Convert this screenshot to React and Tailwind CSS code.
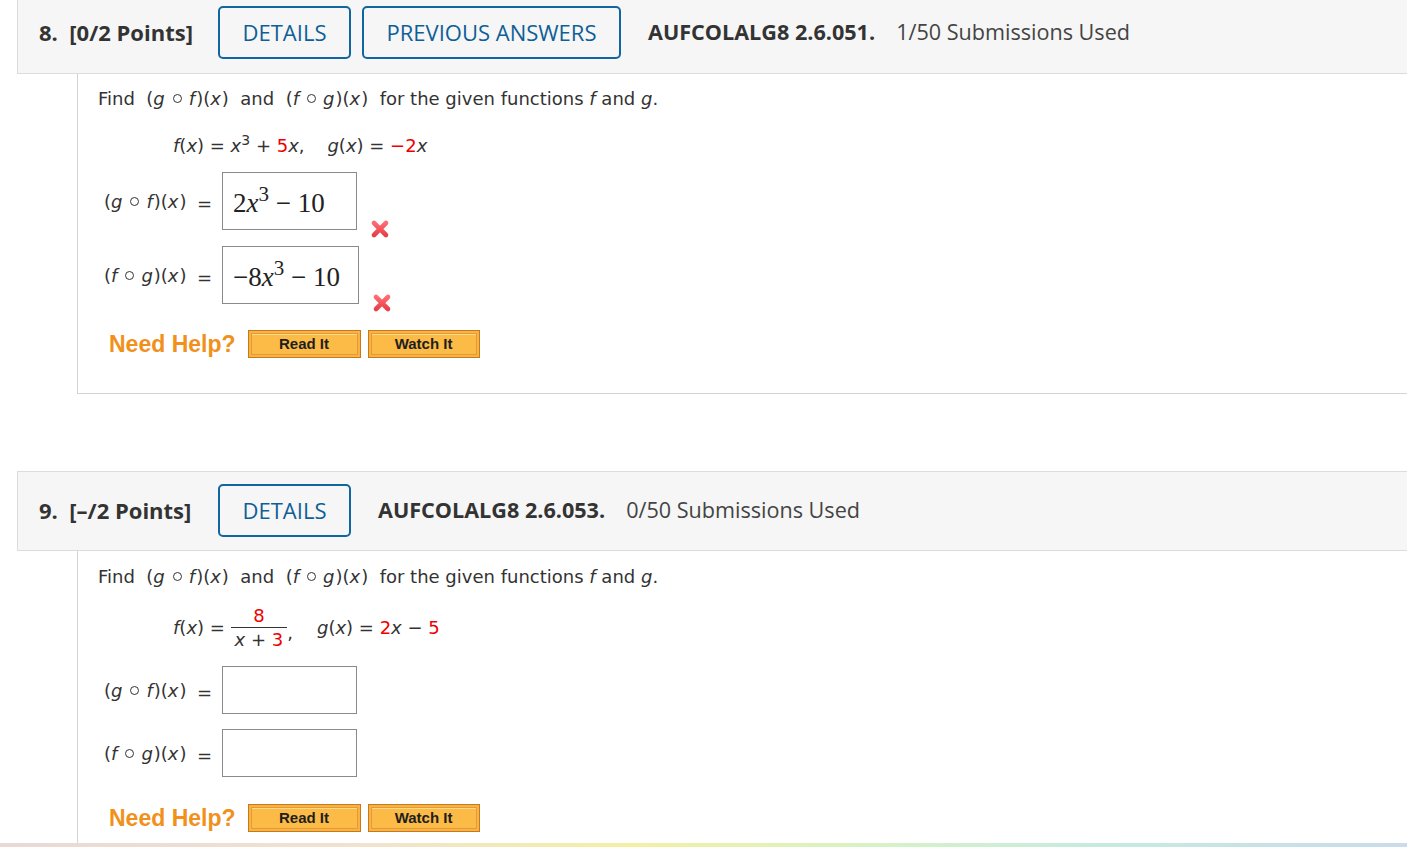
const HEAD = { fontFamily: '"Open Sans", "Liberation Sans", sans-serif' };
const MATH = { fontFamily: '"DejaVu Sans", Verdana, sans-serif' };
const TEX = { fontFamily: '"Liberation Serif", "DejaVu Serif", serif' };
const HELP = { fontFamily: '"Liberation Sans", Arial, sans-serif' };

function Ring() {
  return (
    <span className="mx-[7px] inline-block h-[9px] w-[9px] rounded-full border-[1.5px] border-[#333] align-[2px]" />
  );
}

function V({ children }) {
  return <i className="pr-[1px]">{children}</i>;
}

function Comp({ a, b }) {
  return (
    <span className="whitespace-nowrap">
      (<V>{a}</V>
      <Ring />
      <V>{b}</V>)(<V>x</V>)
    </span>
  );
}

function Red({ children }) {
  return <span className="text-[#ee0000]">{children}</span>;
}

function WrongMark() {
  return (
    <svg width="20" height="20" viewBox="0 0 20 20" className="shrink-0">
      <defs>
        <linearGradient id="xg" x1="0" y1="0" x2="0" y2="1">
          <stop offset="0" stopColor="#ff6b70" />
          <stop offset="1" stopColor="#e8404a" />
        </linearGradient>
      </defs>
      <path
        d="M4 4 L16 16 M16 4 L4 16"
        stroke="url(#xg)"
        strokeWidth="4.6"
        strokeLinecap="round"
      />
    </svg>
  );
}

function HeaderButton({ children, className = "" }) {
  return (
    <div
      className={
        "flex h-[53px] items-center justify-center rounded-[5px] border-2 border-[#1266a0] text-[22px] text-[#0e5f97] " +
        className
      }
    >
      {children}
    </div>
  );
}

function QuestionHeader({ num, points, prev, code, used, className = "" }) {
  return (
    <div
      className={
        "ml-[17px] flex shrink-0 items-center border-b border-l border-[#dcdcdc] bg-[#f6f6f6] pl-[21px] " +
        className
      }
      style={HEAD}
    >
      <span className="w-[179px] text-[22px] font-bold text-[#333]">
        {num}.&nbsp; {points}
      </span>
      <HeaderButton className="w-[133px]">DETAILS</HeaderButton>
      {prev ? (
        <HeaderButton className="ml-[11px] w-[259px]">PREVIOUS ANSWERS</HeaderButton>
      ) : null}
      <span className="ml-[27px] text-[21.6px] font-bold text-[#333]">{code}</span>
      <span className="ml-[21px] text-[21.6px] text-[#444]">{used}</span>
    </div>
  );
}

function AnswerBox({ children, w = "w-[135px]", h = "h-[58px]" }) {
  return (
    <div
      className={
        "flex shrink-0 items-center border border-[#8a8a8a] bg-white pl-[10px] pt-[4px] text-[27px] text-[#222] " +
        w +
        " " +
        h
      }
      style={TEX}
    >
      {children}
    </div>
  );
}

function AnswerRow({ a, b, children, mark, w, h, className = "" }) {
  return (
    <div className={"flex items-center " + className}>
      <span className="flex w-[144px] shrink-0 items-center justify-between pl-[26px] pr-[10px] text-[18px] text-[#333]">
        <Comp a={a} b={b} />
        <span className="mt-[4px]">=</span>
      </span>
      <AnswerBox w={w} h={h}>
        {children}
      </AnswerBox>
      {mark ? (
        <span className="ml-[13px] mt-[56px]">
          <WrongMark />
        </span>
      ) : null}
    </div>
  );
}

function HelpButton({ children, w }) {
  return (
    <div
      className={
        "flex h-[28px] items-center justify-center border border-[#c6781f] bg-[#f9b43f] p-[2px] " +
        w
      }
    >
      <div className="flex h-full w-full items-center justify-center border border-[#e39a3a] bg-[#fcbb46] shadow-[inset_0_1px_0_#ffd98a] text-[15px] font-bold text-[#1e1e1e]">
        {children}
      </div>
    </div>
  );
}

function NeedHelp({ className = "" }) {
  return (
    <div className={"flex h-[28px] items-center pl-[31px] " + className} style={HELP}>
      <span className="text-[23px] font-bold text-[#f1901a]">Need Help?</span>
      <div className="ml-[12px] flex gap-[7px]">
        <HelpButton w="w-[113px]">Read It</HelpButton>
        <HelpButton w="w-[112px]">Watch It</HelpButton>
      </div>
    </div>
  );
}

function FindLine() {
  return (
    <div className="pl-[20px] text-[18px] text-[#333]">
      Find&nbsp; <Comp a="g" b="f" />
      &nbsp; and&nbsp; <Comp a="f" b="g" />
      &nbsp; for the given functions <i>f</i> and <i>g</i>.
    </div>
  );
}

export default function App() {
  return (
    <div className="flex h-[847px] flex-col overflow-hidden bg-white" style={MATH}>
      <QuestionHeader
        num="8"
        points="[0/2 Points]"
        prev
        code="AUFCOLALG8 2.6.051."
        used="1/50 Submissions Used"
        className="pb-[14px] pt-[6px]"
      />

      <div className="ml-[77px] shrink-0 border-b border-l border-[#d4d4d4] pb-[35px] pt-[11px]">
        <FindLine />
        <div className="mt-[20px] pl-[95px] text-[18px] text-[#333]">
          <i>f</i>(<i>x</i>) = <i>x</i>
          <sup className="text-[14px]">3</sup> + <Red>5</Red>
          <i>x</i>,&nbsp;&nbsp;&nbsp; <i>g</i>(<i>x</i>) = <Red>−2</Red>
          <i>x</i>
        </div>
        <AnswerRow a="g" b="f" mark className="mt-[13px] h-[58px]">
          <span>
            2<i>x</i>
            <sup className="relative -top-[11px] text-[21px]">3</sup> − 10
          </span>
        </AnswerRow>
        <AnswerRow a="f" b="g" mark w="w-[137px]" className="mt-[16px] h-[58px]">
          <span>
            −8<i>x</i>
            <sup className="relative -top-[11px] text-[21px]">3</sup> − 10
          </span>
        </AnswerRow>
        <NeedHelp className="mt-[26px]" />
      </div>

      <div className="h-[77px] shrink-0" />

      <QuestionHeader
        num="9"
        points="[–/2 Points]"
        code="AUFCOLALG8 2.6.053."
        used="0/50 Submissions Used"
        className="border-t pb-[13px] pt-[12px]"
      />

      <div className="ml-[77px] min-h-0 flex-1 overflow-hidden border-l border-[#d4d4d4] pt-[12px]">
        <FindLine />
        <div className="mt-[14px] flex items-center pl-[95px] text-[18px] text-[#333]">
          <span>
            <i>f</i>(<i>x</i>) =&nbsp;
          </span>
          <span className="inline-flex flex-col items-center leading-[23px]">
            <span className="px-[4px]">
              <Red>8</Red>
            </span>
            <span className="border-t border-[#333] px-[4px]">
              <i>x</i> + <Red>3</Red>
            </span>
          </span>
          <span className="mt-[10px]">,</span>
          <span className="ml-[24px]">
            <i>g</i>(<i>x</i>) = <Red>2</Red>
            <i>x</i> − <Red>5</Red>
          </span>
        </div>
        <AnswerRow a="g" b="f" h="h-[48px]" className="mt-[15px]" />
        <AnswerRow a="f" b="g" h="h-[48px]" className="mt-[15px]" />
        <NeedHelp className="mt-[27px]" />
      </div>

      <div className="h-[4px] shrink-0 bg-[linear-gradient(90deg,#e9d9d6_0%,#f1e2cf_25%,#f3f0a2_45%,#d6f3c4_62%,#c5ebdf_78%,#c9dbec_100%)]" />
    </div>
  );
}
